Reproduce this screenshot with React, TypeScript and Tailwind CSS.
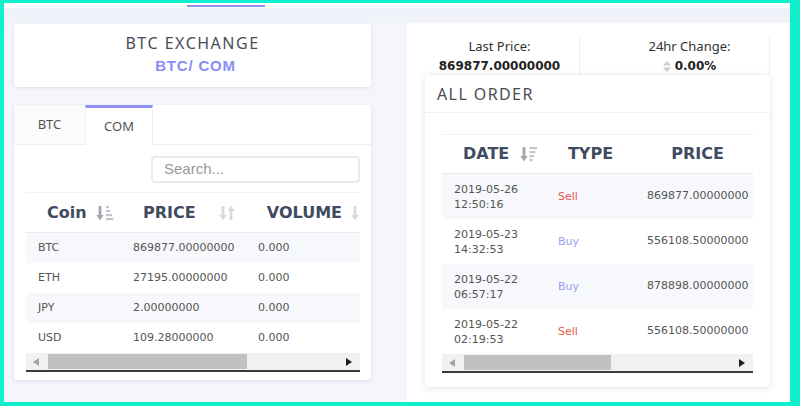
import React from "react";

const sans = { fontFamily: '"Noto Sans", "Open Sans", sans-serif' };
const dv = { fontFamily: '"DejaVu Sans", Verdana, sans-serif' };
const arial = { fontFamily: '"Liberation Sans", Arial, sans-serif' };

function SortAmountUp() {
  // arrow down with bars widening downward
  return (
    <svg width="18" height="16" viewBox="0 0 18 16">
      <path d="M4 1v11" stroke="#a3a7b0" strokeWidth="2.8" />
      <path d="M0.3 10l3.7 5.5 3.7-5.5z" fill="#a3a7b0" />
      <rect x="10" y="1" width="3" height="2.2" fill="#c2c5cc" />
      <rect x="10" y="5" width="4.5" height="2.2" fill="#c2c5cc" />
      <rect x="10" y="9" width="6" height="2.2" fill="#c2c5cc" />
      <rect x="10" y="13" width="7.5" height="2.2" fill="#c2c5cc" />
    </svg>
  );
}

function SortAmountDown() {
  return (
    <svg width="18" height="16" viewBox="0 0 18 16">
      <path d="M4 1v11" stroke="#a3a7b0" strokeWidth="2.8" />
      <path d="M0.3 10l3.7 5.5 3.7-5.5z" fill="#a3a7b0" />
      <rect x="9.5" y="1" width="7.5" height="2.2" fill="#c2c5cc" />
      <rect x="9.5" y="5" width="6" height="2.2" fill="#c2c5cc" />
      <rect x="9.5" y="9" width="4.5" height="2.2" fill="#c2c5cc" />
      <rect x="9.5" y="13" width="3" height="2.2" fill="#c2c5cc" />
    </svg>
  );
}

function SortBoth() {
  return (
    <svg width="18" height="16" viewBox="0 0 18 16">
      <path d="M5 1v11" stroke="#d8dadf" strokeWidth="2.8" />
      <path d="M1.3 10l3.7 5.5 3.7-5.5z" fill="#d8dadf" />
      <path d="M13 4v11" stroke="#d8dadf" strokeWidth="2.8" />
      <path d="M9.3 6l3.7-5.5 3.7 5.5z" fill="#d8dadf" />
    </svg>
  );
}

function SortDown() {
  return (
    <svg width="10" height="16" viewBox="0 0 10 16">
      <path d="M5 1v11" stroke="#d8dadf" strokeWidth="2.8" />
      <path d="M1.3 10l3.7 5.5 3.7-5.5z" fill="#d8dadf" />
    </svg>
  );
}

function ScrollBar({ thumbLeft, thumbWidth }: { thumbLeft: number; thumbWidth: number }) {
  return (
    <div className="relative h-[17px] bg-[#f1f1f1] border-b-2 border-[#3a3a3a] box-content">
      <svg className="absolute left-[7px] top-[5px]" width="6" height="8" viewBox="0 0 6 8">
        <path d="M6 0v8L0 4z" fill="#a3a3a3" />
      </svg>
      <div
        className="absolute top-[1px] h-[15px] bg-[#c1c1c1]"
        style={{ left: thumbLeft, width: thumbWidth }}
      />
      <svg className="absolute right-[8px] top-[5px]" width="6" height="8" viewBox="0 0 6 8">
        <path d="M0 0v8l6-4z" fill="#1f1f1f" />
      </svg>
    </div>
  );
}

const coins = [
  ["BTC", "869877.00000000", "0.000"],
  ["ETH", "27195.00000000", "0.000"],
  ["JPY", "2.00000000", "0.000"],
  ["USD", "109.28000000", "0.000"],
];

const orders = [
  ["2019-05-26", "12:50:16", "Sell", "869877.00000000"],
  ["2019-05-23", "14:32:53", "Buy", "556108.50000000"],
  ["2019-05-22", "06:57:17", "Buy", "878898.00000000"],
  ["2019-05-22", "02:19:53", "Sell", "556108.50000000"],
];

export default function App() {
  return (
    <div className="w-[800px] h-[406px] bg-[#10f0cc] pt-[3px] pl-[4px] pr-[10px] pb-[4px]">
      <div className="h-full bg-[#f5f6fb] flex flex-col overflow-hidden">
        {/* top nav remnant */}
        <div className="relative h-[5px] bg-white shrink-0">
          <div className="absolute left-[183px] top-[2px] w-[78px] h-[2px] bg-[#8f92f4]" />
        </div>
        <div className="flex flex-1 min-h-0 bg-gradient-to-b from-[#eef0fa] to-[#f5f6fb] to-[20px]">
          {/* left column */}
          <div className="w-[357px] ml-[10px] pt-[16px] flex flex-col gap-[18px]">
            <div className="h-[63px] bg-white rounded-[3px] shadow-[0_1px_4px_rgba(40,40,80,0.10)] flex flex-col items-center pt-[9px]">
              <div className="text-[16px] leading-[20px] text-[#4b4b55] tracking-[1.5px]" style={sans}>
                BTC EXCHANGE
              </div>
              <div className="text-[15px] leading-[20px] font-bold text-[#8a8cf6] tracking-[0.8px] mt-[3px] ml-[6px]" style={arial}>
                BTC/ COM
              </div>
            </div>

            <div className="h-[275px] bg-white rounded-[3px] shadow-[0_1px_4px_rgba(40,40,80,0.10)] flex flex-col">
              {/* tabs */}
              <div className="flex h-[40px] border-b border-[#eceef2]" style={sans}>
                <div className="w-[71px] bg-[#fafbfc] flex items-center justify-center text-[13px] text-[#555]">
                  BTC
                </div>
                <div className="w-[68px] bg-white border-t-[3px] border-[#8f92f4] border-x border-x-[#eceef2] -mb-px flex items-center justify-center text-[13px] text-[#555] pt-px">
                  COM
                </div>
              </div>
              <div className="px-[11px] pl-[12px] pt-[11px] flex flex-col">
                <div className="flex justify-end">
                  <div
                    className="w-[209px] h-[27px] border-2 border-[#e9ebf2] rounded-[4px] flex items-center pl-[11px] text-[15px] text-[#999]"
                    style={arial}
                  >
                    Search...
                  </div>
                </div>
                <div className="mt-[9px] overflow-hidden">
                  <div className="flex h-[41px] items-center border-t border-[#f0f1f4] border-b border-b-[#e6e8ee] text-[16px] font-bold text-[#3f4b5e] whitespace-nowrap" style={dv}>
                    <div className="w-[107px] pl-[21px] flex items-center gap-[9px]">
                      <span>Coin</span>
                      <SortAmountUp />
                    </div>
                    <div className="w-[117px] pl-[10px] flex items-center gap-[22px]">
                      <span>PRICE</span>
                      <SortBoth />
                    </div>
                    <div className="pl-[17px] flex items-center gap-[8px]">
                      <span>VOLUME</span>
                      <SortDown />
                    </div>
                  </div>
                  {coins.map((c, i) => (
                    <div
                      key={c[0]}
                      className={`flex h-[30px] items-center text-[11px] text-[#555] whitespace-nowrap ${i % 2 === 0 ? "bg-[#f7f8fb]" : "bg-white"}`}
                      style={dv}
                    >
                      <div className="w-[107px] pl-[12px]">{c[0]}</div>
                      <div className="w-[125px]">{c[1]}</div>
                      <div>{c[2]}</div>
                    </div>
                  ))}
                  <ScrollBar thumbLeft={22} thumbWidth={199} />
                </div>
              </div>
            </div>
          </div>

          {/* right panel */}
          <div className="ml-[36px] mt-[15px] flex-1 bg-white flex flex-col">
            <div className="flex h-[52px] pt-[12px]">
              <div className="ml-[13px] w-[160px] border-r border-[#eceef2] flex flex-col items-center pt-[2px]">
                <div className="text-[13px] leading-[18px] text-[#333]" style={sans}>Last Price:</div>
                <div className="text-[12px] leading-[18px] font-bold text-[#222] mt-[2px]" style={dv}>869877.00000000</div>
              </div>
              <div className="w-[190px] pl-[30px] border-r border-[#eceef2] flex flex-col items-center pt-[2px]">
                <div className="text-[13px] leading-[18px] text-[#333]" style={sans}>24hr Change:</div>
                <div className="flex items-center gap-[4px] mt-[2px]">
                  <svg width="8" height="11" viewBox="0 0 8 11">
                    <path d="M0 4.5L4 0l4 4.5z" fill="#c9ccd2" />
                    <path d="M0 6.5L4 11l4-4.5z" fill="#c9ccd2" />
                  </svg>
                  <span className="text-[12px] leading-[18px] font-bold text-[#222]" style={dv}>0.00%</span>
                </div>
              </div>
            </div>

            <div className="ml-[18px] w-[345px] h-[312px] bg-white rounded-[3px] shadow-[0_1px_6px_rgba(40,40,80,0.14)] flex flex-col">
              <div className="h-[38px] border-b border-[#f0f1f5] pl-[12px] flex items-center text-[16px] text-[#4b4b55] tracking-[1.4px]" style={sans}>
                ALL ORDER
              </div>
              <div className="px-[17px] pt-[21px]">
                <div className="overflow-hidden">
                  <div className="flex h-[40px] items-center border-t border-[#f0f1f4] border-b border-b-[#e6e8ee] text-[16px] font-bold text-[#3f4b5e] whitespace-nowrap" style={dv}>
                    <div className="w-[104px] pl-[21px] flex items-center gap-[11px] shrink-0">
                      <span>DATE</span>
                      <SortAmountDown />
                    </div>
                    <div className="w-[89px] flex justify-center shrink-0">TYPE</div>
                    <div className="w-[125px] flex justify-center shrink-0">PRICE</div>
                  </div>
                  {orders.map((o, i) => (
                    <div
                      key={i}
                      className={`flex h-[45px] items-center text-[11px] text-[#555] whitespace-nowrap ${i % 2 === 0 ? "bg-[#f7f8fb]" : "bg-white"}`}
                      style={dv}
                    >
                      <div className="w-[104px] pl-[12px] leading-[15px] shrink-0">
                        <div>{o[0]}</div>
                        <div>{o[1]}</div>
                      </div>
                      <div className={`w-[101px] pl-[12px] pt-[2px] shrink-0 ${o[2] === "Sell" ? "text-[#e85a50]" : "text-[#9a9df6]"}`}>
                        {o[2]}
                      </div>
                      <div className="shrink-0">{o[3]}</div>
                    </div>
                  ))}
                  <ScrollBar thumbLeft={22} thumbWidth={147} />
                </div>
              </div>
            </div>
          </div>
        </div>
      </div>
    </div>
  );
}
